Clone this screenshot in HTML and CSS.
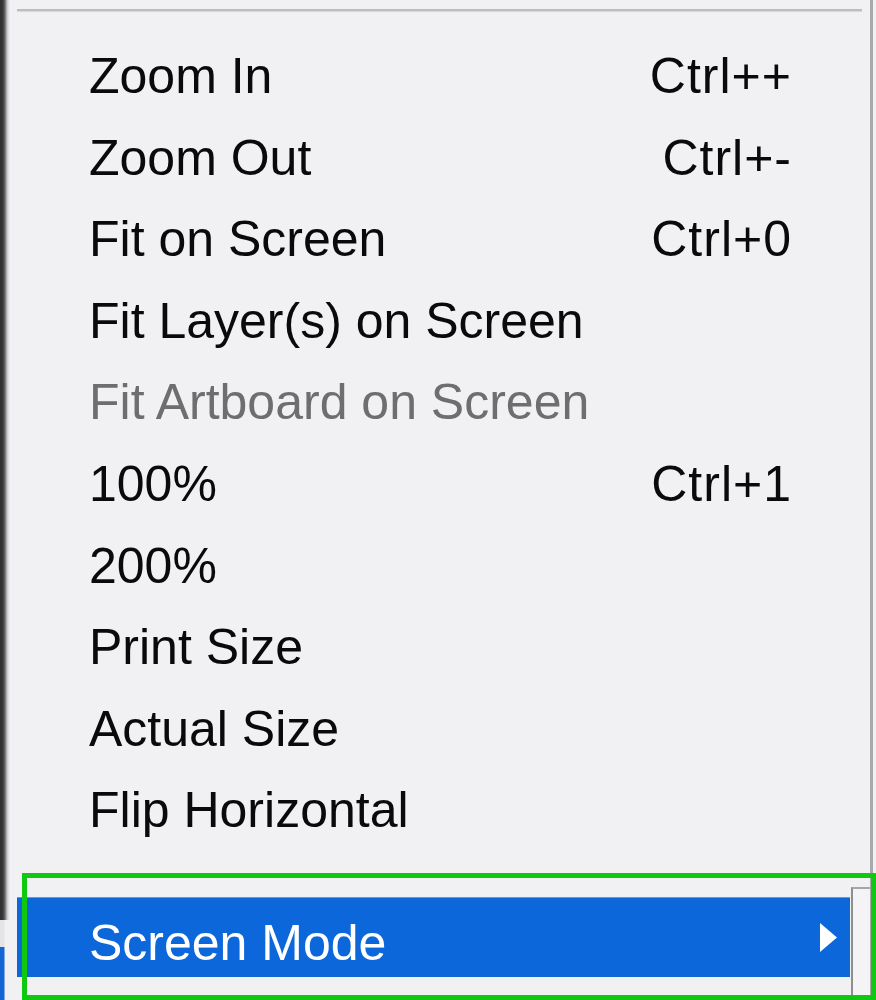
FILE: index.html
```html
<!DOCTYPE html>
<html lang="en">
<head>
    <meta charset="UTF-8">
    <meta name="viewport" content="width=device-width, initial-scale=1.0">
    <title>View Menu</title>
    <link rel="stylesheet" href="styles.css">
</head>
<body>
    <div class="screen">
        <div class="edge">
            <div class="edge-dark"></div>
            <div class="edge-gap"></div>
            <div class="edge-blue"></div>
        </div>

        <div class="menu">
            <div class="menu-sep"></div>
            <ul class="menu-list">
                <li class="menu-item"><span class="label">Zoom In</span><span class="shortcut">Ctrl++</span></li>
                <li class="menu-item"><span class="label">Zoom Out</span><span class="shortcut">Ctrl+-</span></li>
                <li class="menu-item"><span class="label">Fit on Screen</span><span class="shortcut">Ctrl+0</span></li>
                <li class="menu-item"><span class="label">Fit Layer(s) on Screen</span></li>
                <li class="menu-item disabled"><span class="label">Fit Artboard on Screen</span></li>
                <li class="menu-item"><span class="label">100%</span><span class="shortcut">Ctrl+1</span></li>
                <li class="menu-item"><span class="label">200%</span></li>
                <li class="menu-item"><span class="label">Print Size</span></li>
                <li class="menu-item"><span class="label">Actual Size</span></li>
                <li class="menu-item"><span class="label">Flip Horizontal</span></li>
            </ul>
            <div class="submenu-row">
                <div class="menu-item active">
                    <span class="label">Screen Mode</span>
                    <svg class="arrow" width="19" height="31" viewBox="0 0 19 31">
                        <polygon points="1,1 18,15.5 1,30" fill="#fff"/>
                    </svg>
                </div>
                <div class="nub"></div>
            </div>
        </div>

        <!-- highlight box drawn over the selected item -->
        <div class="callout"></div>
    </div>
</body>
</html>
```

FILE: styles.css
```css
html, body {
    margin: 0;
    padding: 0;
}
body {
    font-family: "Liberation Sans", Arial, sans-serif;
    background-color: #f1f0f3;
}
.screen {
    position: relative;
    display: flex;
    width: 876px;
    height: 1000px;
    overflow: hidden;
    background-color: #f1f0f3;
}
.edge {
    display: flex;
    flex-direction: column;
    width: 10px;
    flex-shrink: 0;
}
.edge-dark {
    height: 920px;
    background: linear-gradient(to right, #2e2e2e 0, #3a3a3a 3px, #6a6a6a 5px, #c4c4c4 7px, #e6e6e8 9px, #f1f0f3 10px);
}
.edge-gap {
    height: 27px;
    background: linear-gradient(to right, #e4e4e6 0, #e4e4e6 4px, #f1f0f3 5px);
}
.edge-blue {
    flex: 1;
    background: linear-gradient(to right, #1566d4 0, #1566d4 4px, #f1f0f3 5px);
}
.menu {
    width: 860px;
    flex-shrink: 0;
    border-right: 3px solid #a9a9ab;
}
.menu-sep {
    height: 2px;
    margin: 9px 8px 0 7px;
    background-color: #bdbdbf;
    box-shadow: 0 1px 1px #d6d6d8;
}
.menu-list {
    list-style: none;
    margin: 22px 20px 0 7px;
    padding: 0;
}
.menu-item {
    display: flex;
    align-items: flex-start;
    height: 81.6px;
    box-sizing: border-box;
    padding: 6px 58px 0 72px;
    font-size: 50px;
    line-height: 74px;
    color: #0a0a0a;
}
.menu-item .label {
    flex: 1;
    white-space: nowrap;
}
.menu-item .shortcut {
    letter-spacing: 1px;
    white-space: nowrap;
}
.menu-item.disabled {
    color: #6e6e70;
}
.submenu-row {
    display: flex;
    height: 151px;
}
.menu-item.active {
    flex: 1;
    height: 80px;
    margin: 48px 0 0 7px;
    padding-top: 8px;
    padding-right: 12px;
    background-color: #0b67da;
    border-top: 1px solid #5e9ae6;
    color: #fff;
}
.menu-item.active .arrow {
    margin-top: 16px;
}
.nub {
    width: 17px;
    margin: 38px 0 0 1px;
    border-left: 2px solid #8e8e90;
    border-top: 2px solid #a6a6a8;
    background-color: #f4f3f6;
}
.callout {
    position: absolute;
    left: 22px;
    top: 873px;
    width: 854px;
    height: 127px;
    box-sizing: border-box;
    border: 5px solid #10c810;
}
```
